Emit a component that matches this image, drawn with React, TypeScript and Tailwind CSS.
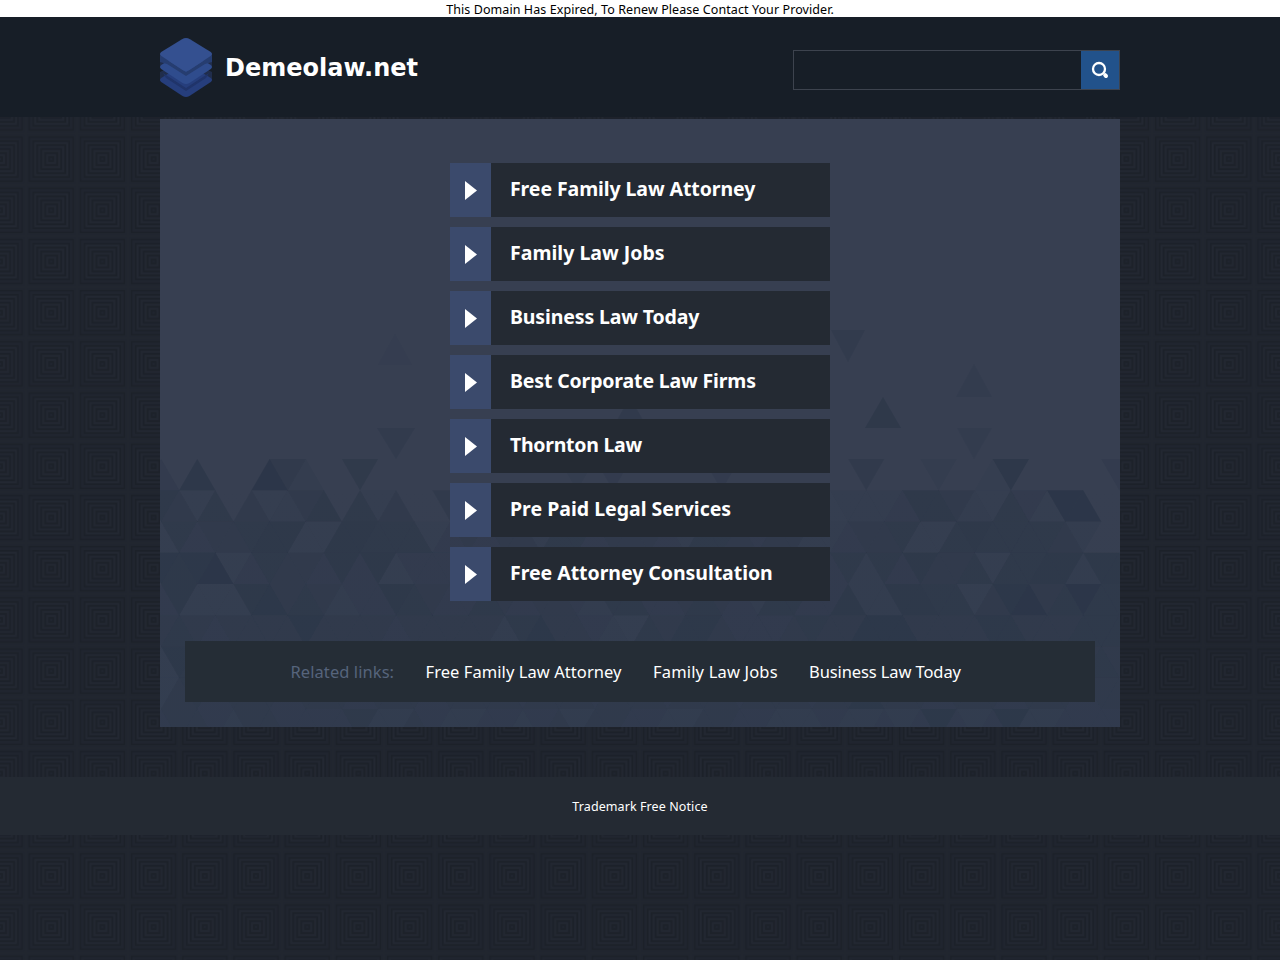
import React from "react";

const links = [
  { label: "Free Family Law Attorney", spacing: "tracking-[-0.09px]" },
  { label: "Family Law Jobs", spacing: "tracking-[0.02px]" },
  { label: "Business Law Today", spacing: "tracking-[-0.14px]" },
  { label: "Best Corporate Law Firms", spacing: "tracking-[-0.15px]" },
  { label: "Thornton Law", spacing: "tracking-[-0.28px]" },
  { label: "Pre Paid Legal Services", spacing: "tracking-[0px]" },
  { label: "Free Attorney Consultation", spacing: "tracking-[-0.04px]" },
];

const related = [
  { label: "Free Family Law Attorney", style: "w-[196.5px] tracking-[0.07px]" },
  { label: "Family Law Jobs", style: "w-[125px] tracking-[0.17px]" },
  { label: "Business Law Today", style: "w-[153px] tracking-[-0.1px]" },
];

// Each row is a strip of alternating triangles, one digit per triangle: 0 is clear, 9 darkest.
const mosaic = [
  "307000842005000000" + "0000020300000300000" + "00400020017000003",
  "641504124605140040" + "0230440520134205413" + "12223664215318800",
  "153445661166555134" + "3442553444325543442" + "23445115655554200",
  "767813544363613333" + "4325534432552344355" + "35253644515566266",
  "361116745423365433" + "5434432553345432553" + "36226655147845855",
  "454344447444434444" + "4257443215466433345" + "44777444466444555",
  "165454444544445444" + "4454445444544454445" + "44454445444544454",
  "145344434443444344" + "4434443444344434443" + "44644434443444344",
  "344324433335224322" + "3323424433224433222" + "32232363236223333",
];

const strays = [
  { points: "378,365 395,334 412,365", level: 1.2 },
  { points: "377,428 415,428 396,459", level: 3.5 },
  { points: "612,429 630,397 648,429", level: 4 },
  { points: "831,330 865,330 848,362", level: 3.5 },
  { points: "956,397 974,364 992,397", level: 2.5 },
  { points: "865,428 883,397 901,428", level: 6 },
  { points: "957,428 992,428 974,459", level: 2.5 },
];

function Mosaic() {
  const half = 18.08;
  const height = 31.25;
  return (
    <svg className="absolute inset-0 h-full w-full" viewBox="160 119 960 608" aria-hidden="true">
      <defs>
        <linearGradient id="panelShade" x1="0" y1="0" x2="0" y2="1">
          <stop offset="0.6" stopColor="#2f3d50" stopOpacity="0" />
          <stop offset="1" stopColor="#2f3d50" stopOpacity="0.25" />
        </linearGradient>
      </defs>
      <rect x="160" y="119" width="960" height="608" fill="url(#panelShade)" />
      <g fill="#222f40">
        {strays.map((s) => (
          <polygon key={s.points} points={s.points} fillOpacity={s.level * 0.06} />
        ))}
        {mosaic.map((row, r) =>
          row.split("").map((digit, i) => {
            const x = 179.2 + (i - 2) * half;
            const top = 459 + r * height;
            const bottom = top + height;
            const up = (r + i) % 2 === 0;
            const points = up
              ? `${x},${bottom} ${x + half},${top} ${x + half * 2},${bottom}`
              : `${x},${top} ${x + half * 2},${top} ${x + half},${bottom}`;
            return <polygon key={`${r}-${i}`} points={points} fillOpacity={Number(digit) * 0.06} />;
          })
        )}
      </g>
    </svg>
  );
}

function Backdrop() {
  return (
    <svg className="absolute inset-0 h-full w-full" aria-hidden="true">
      <defs>
        <pattern id="squares" x="-25.6" y="-20.1" width="51.2" height="51.2" patternUnits="userSpaceOnUse">
          <rect width="51.2" height="51.2" fill="#20252f" />
          <g fill="none" stroke="#1c2129" strokeWidth="1.6">
            <rect x="23.6" y="23.6" width="4" height="4" />
            <rect x="19.6" y="19.6" width="12" height="12" />
            <rect x="15.6" y="15.6" width="20" height="20" />
            <rect x="11.6" y="11.6" width="28" height="28" />
            <rect x="7.6" y="7.6" width="36" height="36" />
            <rect x="3.6" y="3.6" width="44" height="44" />
          </g>
          <g fill="none" stroke="#232832" strokeWidth="1">
            <rect x="21.6" y="21.6" width="8" height="8" />
            <rect x="17.6" y="17.6" width="16" height="16" />
            <rect x="13.6" y="13.6" width="24" height="24" />
            <rect x="9.6" y="9.6" width="32" height="32" />
          </g>
          <path d="M0 0H51.2M0 51.2H51.2M0 0V51.2M51.2 0V51.2" stroke="#21262f" strokeWidth="2" />
        </pattern>
      </defs>
      <rect width="100%" height="100%" fill="url(#squares)" />
    </svg>
  );
}

function Logo() {
  const sheet =
    "M22 1.2 Q26 -1.2 30 1.2 L50.8 14 Q53.2 16 50.8 18 L29.5 32 Q26 34 22.5 32 L1.2 18 Q-1.2 16 1.2 14 Z";
  return (
    <svg className="h-[59px] w-[52px]" viewBox="0 0 52 59" aria-hidden="true">
      <path d="M0 16H52V28L46 31L52 34V42L26 56L0 42V34L6 31L0 28Z" fill="#202d4b" />
      <path d={sheet} transform="translate(0 26)" fill="#263e7c" />
      <path d="M3 35 L26 50 L49 35 L46 40 L26 53 L6 40Z" fill="#20346a" />
      <path d={sheet} transform="translate(0 13)" fill="#2f4c8d" />
      <path d="M0 17 L26 34 L52 17 V24 L45 26 L26 38 L7 26 L0 24Z" fill="#263d70" />
      <path d={sheet} fill="#345090" />
    </svg>
  );
}

export default function App() {
  return (
    <div className="relative h-[960px] w-full overflow-hidden bg-[#20252f] font-['Noto_Sans',sans-serif] text-white">
      <Backdrop />
      <div className="relative flex flex-col">
        <div className="h-[17px] bg-white text-center text-[12.5px] leading-[19px] tracking-[0.08px] text-black">
          This Domain Has Expired, To Renew Please Contact Your Provider.
        </div>

        <header className="h-[100px] bg-[#171e27]">
          <div className="mx-auto flex h-full w-[960px] items-start justify-between">
            <div className="flex items-start pt-[21px]">
              <Logo />
              <h1 className="ml-[13px] mt-[14px] font-['DejaVu_Sans',sans-serif] text-[24px] font-bold leading-[32px]">
                Demeolaw.net
              </h1>
            </div>
            <form className="mt-[33px] flex h-10 w-[327px] border border-[#3d434e]">
              <input className="min-w-0 flex-1 bg-transparent px-3 text-sm outline-none" aria-label="Search" />
              <button
                type="button"
                aria-label="Search"
                className="flex w-[38px] items-center justify-center bg-[#22528b]"
              >
                <svg className="h-[18px] w-[18px]" viewBox="0 0 18 18" fill="none" stroke="white">
                  <circle cx="8" cy="8" r="6" strokeWidth="2.3" />
                  <path d="M14.2 14.2 L15 15" strokeWidth="4" strokeLinecap="round" />
                </svg>
              </button>
            </form>
          </div>
        </header>

        <main className="relative mx-auto mt-[2px] h-[608px] w-[960px] bg-[#373f51]">
          <Mosaic />
          <div className="relative flex flex-col items-center pt-11">
            <ul className="flex w-[380px] flex-col gap-[10px]">
              {links.map((link) => (
                <li key={link.label} className="flex h-[54px] bg-[#242a33]">
                  <span className="flex w-[41px] items-center bg-[#3b4a6c] pl-[15px]">
                    <svg className="h-5 w-3" viewBox="0 0 12 20" fill="white">
                      <path d="M0 1 L12 10.5 L0 20Z" />
                    </svg>
                  </span>
                  <a
                    className={`whitespace-nowrap pl-[19px] text-[19.5px] font-bold leading-[52px] ${link.spacing}`}
                  >
                    {link.label}
                  </a>
                </li>
              ))}
            </ul>
            <div className="mt-10 flex h-[61px] w-[910px] bg-[#252d36] pl-[105.5px] text-[16.5px] leading-[61px]">
              <span className="w-[135px] tracking-[0.07px] text-[#56647c]">Related links:</span>
              <div className="flex gap-[31px]">
                {related.map((item) => (
                  <a key={item.label} className={`whitespace-nowrap ${item.style}`}>
                    {item.label}
                  </a>
                ))}
              </div>
            </div>
          </div>
        </main>

        <footer className="mt-[50px] h-[58px] bg-[#242a33] text-center text-[12.5px] leading-[59px] tracking-[0.09px]">
          Trademark Free Notice
        </footer>
      </div>
    </div>
  );
}
